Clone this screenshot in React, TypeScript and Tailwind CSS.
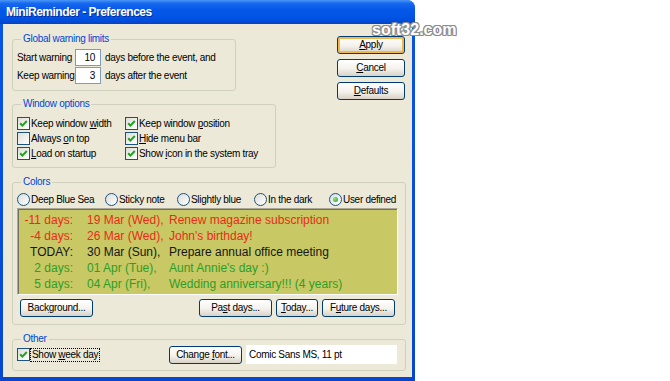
import React from "react";

const ui = "font-['Liberation_Sans',Arial,sans-serif] text-[10px] tracking-[-0.3px] text-black";

const U = ({ children }: { children: React.ReactNode }) => (
  <span className="underline underline-offset-[1px]">{children}</span>
);

const Check = ({ checked }: { checked: boolean }) => (
  <span className="w-[13px] h-[13px] shrink-0 border border-[#1c5180] bg-[linear-gradient(135deg,#dcdcd7,#ffffff)] flex items-center justify-center">
    {checked && (
      <svg width="11" height="11" viewBox="0 0 11 11">
        <path d="M2.2 5.2 L4.4 7.6 L8.8 3" fill="none" stroke="#21a121" strokeWidth="2" />
      </svg>
    )}
  </span>
);

const Radio = ({ checked }: { checked: boolean }) => (
  <span className="w-[13px] h-[13px] shrink-0 rounded-full border border-[#1c5180] bg-[linear-gradient(135deg,#dcdcd7,#ffffff)] flex items-center justify-center">
    {checked && (
      <span className="w-[5px] h-[5px] rounded-full bg-[radial-gradient(circle_at_35%_35%,#8ee38a,#21a121)]" />
    )}
  </span>
);

const Btn = ({
  children,
  className = "",
  def = false,
}: {
  children: React.ReactNode;
  className?: string;
  def?: boolean;
}) => (
  <div
    className={`h-[18px] flex items-center justify-center rounded-[3px] border border-[#003c74] bg-[linear-gradient(to_bottom,#ffffff,#f4f2ec_55%,#d8d2c6)] leading-[12px] ${
      def ? "shadow-[inset_0_0_0_2px_#f3b649]" : ""
    } ${className}`}
  >
    <span className="whitespace-nowrap">{children}</span>
  </div>
);

const Group = ({
  title,
  className = "",
  children,
}: {
  title: string;
  className?: string;
  children: React.ReactNode;
}) => (
  <fieldset className={`border border-[#d0d0bf] rounded-[3px] pl-[4px] ${className}`}>
    <legend className="ml-[4px] px-[2px] leading-[14px] text-[#0046d5]">{title}</legend>
    {children}
  </fieldset>
);

const CheckRow = ({ checked, children }: { checked: boolean; children: React.ReactNode }) => (
  <div className="h-[15px] flex items-center gap-[1px]">
    <Check checked={checked} />
    <span className="whitespace-nowrap">{children}</span>
  </div>
);

const entries = [
  { days: "-11 days:", date: "19 Mar (Wed),", text: "Renew magazine subscription", color: "text-[#ea2b17]" },
  { days: "-4 days:", date: "26 Mar (Wed),", text: "John's birthday!", color: "text-[#ea2b17]" },
  { days: "TODAY:", date: "30 Mar (Sun),", text: "Prepare annual office meeting", color: "text-[#161616]" },
  { days: "2 days:", date: "01 Apr (Tue),", text: "Aunt Annie's day :)", color: "text-[#2e9e26]" },
  { days: "5 days:", date: "04 Apr (Fri),", text: "Wedding anniversary!!! (4 years)", color: "text-[#2e9e26]" },
];

const schemes = [
  { name: "Deep Blue Sea", w: "w-[88px]", on: false },
  { name: "Sticky note", w: "w-[72px]", on: false },
  { name: "Slightly blue", w: "w-[77px]", on: false },
  { name: "In the dark", w: "w-[75px]", on: false },
  { name: "User defined", w: "", on: true },
];

export default function App() {
  return (
    <div className="relative w-[670px] h-[381px] bg-white overflow-hidden">
      <div className={`w-[415px] h-[381px] flex flex-col rounded-tr-[8px] bg-[linear-gradient(to_bottom,#0a55e3,#0747cf)] ${ui}`}>
        {/* title bar */}
        <div className="h-[24px] shrink-0 rounded-tr-[8px] bg-[linear-gradient(to_bottom,#4a98f7_0%,#1868f0_14%,#0558e8_40%,#0154e4_72%,#024bd9_90%,#0a3fc0_100%)] flex items-center pl-[6px]">
          <span className="font-bold text-[12px] tracking-[-0.5px] text-white [text-shadow:1px_1px_0_#0a2a9a]">
            MiniReminder - Preferences
          </span>
        </div>

        {/* body */}
        <div className="flex-1 mx-[3px] mb-[4px] bg-[#ece9d8] flex flex-col pl-[9px] pr-[6px]">
          <div className="flex items-start">
            <div className="flex flex-col">
              <Group title="Global warning limits" className="mt-[8px] w-[224px] pt-[3px] pb-[6px]">
                <div className="flex flex-col gap-[1px]">
                  <div className="h-[17px] flex items-center whitespace-nowrap">
                    <span className="w-[58px] shrink-0">Start warning</span>
                    <span className="w-[26px] h-[17px] shrink-0 border border-[#7f9db9] bg-white flex items-center justify-end pr-[5px]">10</span>
                    <span className="ml-[4px]">days before the event, and</span>
                  </div>
                  <div className="h-[17px] flex items-center whitespace-nowrap">
                    <span className="w-[58px] shrink-0">Keep warning</span>
                    <span className="w-[26px] h-[17px] shrink-0 border border-[#7f9db9] bg-white flex items-center justify-end pr-[5px]">3</span>
                    <span className="ml-[4px]">days after the event</span>
                  </div>
                </div>
              </Group>

              <Group title="Window options" className="mt-[6px] w-[264px] pt-[5px] pb-[6px]">
                <div className="grid grid-cols-[108px_1fr]">
                  <CheckRow checked>Keep window <U>w</U>idth</CheckRow>
                  <CheckRow checked>Keep window <U>p</U>osition</CheckRow>
                  <CheckRow checked={false}>Always <U>o</U>n top</CheckRow>
                  <CheckRow checked><U>H</U>ide menu bar</CheckRow>
                  <CheckRow checked><U>L</U>oad on startup</CheckRow>
                  <CheckRow checked>Show <U>i</U>con in the system tray</CheckRow>
                </div>
              </Group>
            </div>

            <div className="ml-auto mt-[12px] mr-[1px] w-[68px] flex flex-col gap-[5px]">
              <Btn def><U>A</U>pply</Btn>
              <Btn><U>C</U>ancel</Btn>
              <Btn><U>D</U>efaults</Btn>
            </div>
          </div>

          <Group title="Colors" className="mt-[7px] pt-[3px] pb-[7px]">
            <div className="h-[14px] flex items-center">
              {schemes.map((s) => (
                <div key={s.name} className={`flex items-center gap-[1px] whitespace-nowrap ${s.w}`}>
                  <Radio checked={s.on} />
                  <span>{s.name}</span>
                </div>
              ))}
            </div>
            <div className="mt-[2px] w-[381px] h-[87px] overflow-hidden bg-[#c8c864] border border-[#aca899] border-b-white border-r-white shadow-[inset_1px_1px_0_#716f64] pt-[3px] text-[12px] tracking-normal leading-[16px]">
              {entries.map((e) => (
                <div key={e.days} className={`grid grid-cols-[69px_82px_1fr] whitespace-nowrap ${e.color}`}>
                  <span className="text-right pr-[14px]">{e.days}</span>
                  <span>{e.date}</span>
                  <span>{e.text}</span>
                </div>
              ))}
            </div>
            <div className="mt-[4px] w-[381px] px-[3px] flex items-center">
              <Btn className="w-[73px]">Back<U>g</U>round...</Btn>
              <div className="ml-auto flex items-center gap-[4px]">
                <Btn className="w-[73px]">Pa<U>s</U>t days...</Btn>
                <Btn className="w-[42px]"><U>T</U>oday...</Btn>
                <Btn className="w-[73px]">F<U>u</U>ture days...</Btn>
              </div>
            </div>
          </Group>

          <Group title="Other" className="mt-[7px] pb-[6px] pr-[8px]">
            <div className="-mt-[1px] h-[19px] flex items-center">
              <Check checked />
              <span className="px-[1px] leading-[12px] border border-dotted border-black whitespace-nowrap">
                Show <U>w</U>eek day
              </span>
              <Btn className="ml-auto w-[73px] h-[17px]">Change <U>f</U>ont...</Btn>
              <span className="ml-[4px] w-[151px] h-[19px] bg-white flex items-center pl-[3px] whitespace-nowrap">
                Comic Sans MS, 11 pt
              </span>
            </div>
          </Group>
        </div>
      </div>

      <span className="absolute left-[372px] top-[22px] font-['Liberation_Sans',Arial,sans-serif] font-bold text-[16px] leading-[16px] text-white [text-shadow:1px_0_0_#8c8c8c,-1px_0_0_#8c8c8c,0_1px_0_#8c8c8c,0_-1px_0_#8c8c8c,1px_1px_0_#8c8c8c,-1px_-1px_0_#8c8c8c,1px_-1px_0_#8c8c8c,-1px_1px_0_#8c8c8c]">
        soft32.com
      </span>
    </div>
  );
}
